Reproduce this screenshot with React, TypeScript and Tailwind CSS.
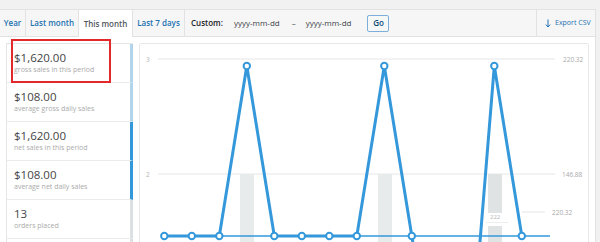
import React from 'react';

const legend = [
  { amount: '$1,620.00', label: 'gross sales in this period', color: 'border-r-[#b1d4ea]' },
  { amount: '$108.00', label: 'average gross daily sales', color: 'border-r-[#b1d4ea]' },
  { amount: '$1,620.00', label: 'net sales in this period', color: 'border-r-[#3498db]' },
  { amount: '$108.00', label: 'average net daily sales', color: 'border-r-[#3498db]' },
  { amount: '13', label: 'orders placed', color: 'border-r-[#dbe1e3]' },
];

// chart coords are relative to the inside of the chart box
const base = 192;
const peak = 22;
const ys = [base, base, base, peak, base, base, base, base, peak, base, 360, 360, peak, base];
const pts = ys.map((y, i) => ({ x: 24.3 + i * 27.5, y }));

function Chart() {
  return (
    <svg width="448" height="206" className="block">
      <line x1="18" y1="15" x2="415" y2="15" stroke="#e6e6e6" strokeWidth="1" />
      <line x1="18" y1="130" x2="415" y2="130" stroke="#e6e6e6" strokeWidth="1" />
      <line x1="382" y1="168" x2="405" y2="168" stroke="#e6e6e6" strokeWidth="1" />
      <text x="6" y="17.5" fontSize="6.5" fill="#b5b5b5" fontFamily="Open Sans">3</text>
      <text x="6" y="132.5" fontSize="6.5" fill="#b5b5b5" fontFamily="Open Sans">2</text>
      <text x="423" y="17.5" fontSize="6.5" fill="#a9a9a9" fontFamily="Open Sans">220.32</text>
      <text x="422" y="132.5" fontSize="6.5" fill="#a9a9a9" fontFamily="Open Sans">146.88</text>
      <text x="412" y="170.5" fontSize="6.5" fill="#a9a9a9" fontFamily="Open Sans">220.32</text>

      <rect x="100" y="130" width="14" height="80" fill="#e8ebec" />
      <rect x="238" y="130" width="14" height="80" fill="#e8ebec" />
      <rect x="348" y="130" width="14" height="39" fill="#dfe3e4" />
      <rect x="348" y="182" width="14" height="30" fill="#dfe3e4" />
      <line x1="346" y1="178.5" x2="368" y2="178.5" stroke="#eeeeee" strokeWidth="1" />
      <text x="350" y="174.5" fontSize="6" fill="#b8b8b8" fontFamily="Open Sans">222</text>

      <line x1="24" y1={base} x2="410" y2={base} stroke="#3498db" strokeWidth="1.5" />
      <polyline
        points={pts.map((p) => `${p.x},${p.y}`).join(' ')}
        fill="none"
        stroke="#3498db"
        strokeWidth="3"
        strokeLinejoin="round"
      />
      {pts
        .filter((p) => p.y < 300)
        .map((p, i) => (
          <circle key={i} cx={p.x} cy={p.y} r="3.2" fill="#fff" stroke="#3498db" strokeWidth="2" />
        ))}
    </svg>
  );
}

export default function App() {
  return (
    <div className="relative h-[242px] w-[600px] overflow-hidden bg-[#f1f1f1] pt-[9px] font-['Open_Sans',sans-serif]">
      <div className="w-[596px] border-r border-[#e2e2e2]">
        {/* range tabs */}
        <div className="flex h-[28px] border-t border-b border-[#e2e2e2] bg-[#f6f6f6] text-[8px]">
          <div className="flex w-[26px] items-center justify-center border-r border-[#e2e2e2] font-semibold text-[#2271b1]">
            Year
          </div>
          <div className="flex w-[53px] items-center justify-center border-r border-[#e2e2e2] font-semibold text-[#2271b1]">
            Last month
          </div>
          <div className="-mb-px flex w-[54px] items-center justify-center border-r border-[#e2e2e2] bg-white font-semibold text-[#50575e]">
            This month
          </div>
          <div className="flex w-[52px] items-center justify-center border-r border-[#e2e2e2] font-semibold text-[#2271b1]">
            Last 7 days
          </div>
          <div className="flex flex-1 items-center pl-[6px]">
            <span className="font-semibold text-[#1d2327]">Custom:</span>
            <span className="ml-[11px] text-[#3c434a]">yyyy-mm-dd</span>
            <span className="ml-[12px] text-[#3c434a]">–</span>
            <span className="ml-[10px] text-[#3c434a]">yyyy-mm-dd</span>
            <button className="ml-[16px] flex h-[17px] w-[22px] items-center justify-center rounded-[2px] border border-[#7eaedb] bg-[#f6f7f7] font-semibold text-[#0a4b78]">
              Go
            </button>
          </div>
          <div className="flex w-[59px] items-center border-l border-[#e2e2e2] pl-[8px] text-[7px] text-[#2271b1]">
            <svg width="6" height="9" viewBox="0 0 6 9" className="mr-[4px]">
              <line x1="3" y1="0.5" x2="3" y2="8" stroke="#2271b1" strokeWidth="1" />
              <polyline points="0.8,5.6 3,8 5.2,5.6" fill="none" stroke="#2271b1" strokeWidth="1" />
            </svg>
            Export CSV
          </div>
        </div>

        {/* legend + chart */}
        <div className="flex h-[210px] gap-[6px] bg-white px-[6px] pt-[6px]">
          <ul className="w-[127px] border-l border-t border-[#e5e5e5]">
            {legend.map((item, i) => (
              <li
                key={i}
                className={`border-b border-r-[3px] border-b-[#ececec] pl-[7px] pt-[6px] pb-[7px] ${item.color}`}
              >
                <div className="text-[11.5px] leading-[15px] text-[#444]">{item.amount}</div>
                <div className="text-[7px] leading-[10px] text-[#aaa]">{item.label}</div>
              </li>
            ))}
            <li className="h-[38px] border-r-[3px] border-r-[#dbe1e3]" />
          </ul>
          <div className="h-[220px] w-[450px] rounded-[2px] border border-[#e8e8e8]">
            <Chart />
          </div>
        </div>
      </div>

      {/* highlight annotation */}
      <div className="absolute left-[11px] top-[39px] h-[44px] w-[100px] border-2 border-[#e2292c]" />
    </div>
  );
}
